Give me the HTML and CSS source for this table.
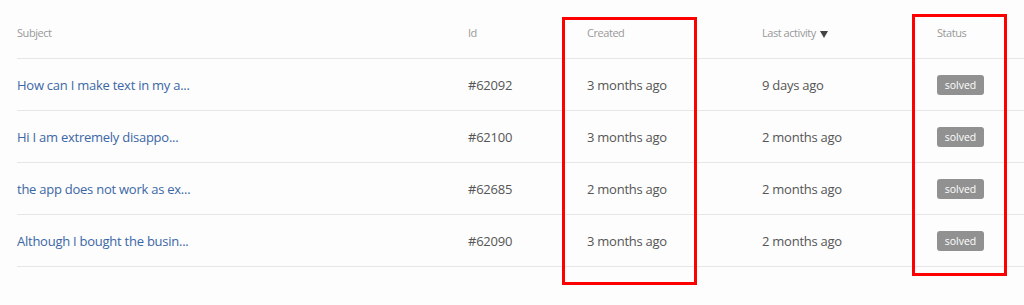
FILE: index.html
```html
<!DOCTYPE html>
<html>
<head>
<meta charset="utf-8">
<link rel="stylesheet" href="styles.css">
</head>
<body>
<div class="page">
  <div class="table">
    <div class="row head">
      <div class="cell">Subject</div>
      <div class="cell">Id</div>
      <div class="cell">Created</div>
      <div class="cell">Last activity <svg class="caret" width="8" height="7" viewBox="0 0 8 7"><path d="M0 0h8L4 7z" fill="#444"/></svg></div>
      <div class="cell">Status</div>
    </div>
    <div class="row">
      <div class="cell"><a class="subject" href="#">How can I make text in my a...</a></div>
      <div class="cell">#62092</div>
      <div class="cell">3 months ago</div>
      <div class="cell">9 days ago</div>
      <div class="cell"><span class="badge">solved</span></div>
    </div>
    <div class="row">
      <div class="cell"><a class="subject" href="#">Hi I am extremely disappo...</a></div>
      <div class="cell">#62100</div>
      <div class="cell">3 months ago</div>
      <div class="cell">2 months ago</div>
      <div class="cell"><span class="badge">solved</span></div>
    </div>
    <div class="row">
      <div class="cell"><a class="subject" href="#">the app does not work as ex...</a></div>
      <div class="cell">#62685</div>
      <div class="cell">2 months ago</div>
      <div class="cell">2 months ago</div>
      <div class="cell"><span class="badge">solved</span></div>
    </div>
    <div class="row">
      <div class="cell"><a class="subject" href="#">Although I bought the busin...</a></div>
      <div class="cell">#62090</div>
      <div class="cell">3 months ago</div>
      <div class="cell">2 months ago</div>
      <div class="cell"><span class="badge">solved</span></div>
    </div>
  </div>
  <div class="mark mark-created"></div>
  <div class="mark mark-status"></div>
</div>
</body>
</html>
```
FILE: styles.css
```css
html, body {
  margin: 0;
  padding: 0;
  background: #fdfdfd;
}
body {
  font-family: "Open Sans", "Noto Sans", sans-serif;
  color: #555;
  width: 1024px;
  height: 305px;
  overflow: hidden;
}
.page {
  position: relative;
  height: 305px;
  padding-left: 17px;
}
.table {
  display: flex;
  flex-direction: column;
}
.row {
  display: grid;
  grid-template-columns: 451px 119px 175px 175px 1fr;
  align-items: center;
  height: 52px;
  box-sizing: border-box;
  border-bottom: 1px solid #e6e6e6;
  font-size: 13px;
  letter-spacing: -0.25px;
  padding-top: 1px;
}
.row.head {
  height: 59px;
  align-items: start;
  padding-top: 25px;
  font-size: 11px;
  line-height: 15px;
  color: #999;
  letter-spacing: -0.45px;
}
.caret {
  vertical-align: -1px;
  margin-left: 2px;
}
.subject {
  color: #3b67a5;
  text-decoration: none;
}
.badge {
  display: inline-flex;
  align-items: center;
  justify-content: center;
  width: 47px;
  height: 20px;
  box-sizing: border-box;
  border-radius: 3px;
  background: #919191;
  color: #fff;
  font-size: 10.5px;
  letter-spacing: 0;
}
.mark {
  position: absolute;
  box-sizing: border-box;
  border: 3px solid #ff0000;
}
.mark-created {
  left: 562px;
  top: 17px;
  width: 135px;
  height: 268px;
}
.mark-status {
  left: 912px;
  top: 14px;
  width: 95px;
  height: 262px;
}
```
